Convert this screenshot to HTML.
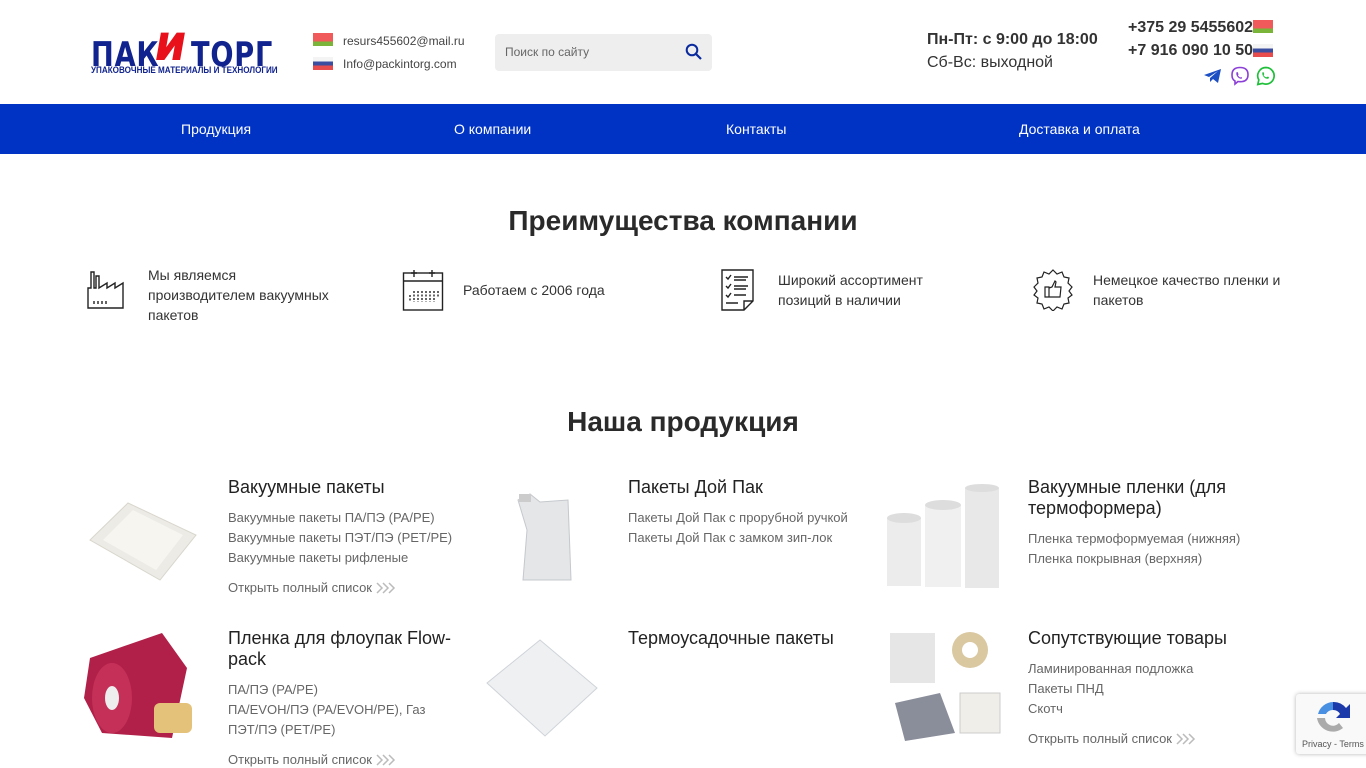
<!DOCTYPE html>
<html><head><meta charset="utf-8"><style>
*{margin:0;padding:0;box-sizing:border-box}
body{width:1366px;height:768px;overflow:hidden;background:#fff;font-family:"Liberation Sans",sans-serif;color:#333;position:relative}
.a{position:absolute}
.flag{position:absolute;width:20px;height:13px}
.by{background:linear-gradient(#f05a5a 0 66%,#7ab53a 66%)}
.ru{background:linear-gradient(#f4f4f4 0 33%,#3b4ea0 33% 66%,#e84c4c 66%)}
.nav{top:104px;left:0;width:1366px;height:50px;background:#0033c4}
.nav span{position:absolute;top:17px;color:#fff;font-size:14px}
h2{position:absolute;width:1366px;text-align:center;font-size:28px;font-weight:bold;color:#2a2a2a}
.adv{font-size:14px;line-height:20px;color:#333}
.pt{font-size:18px;color:#222;line-height:21px}
.pl{font-size:13px;color:#666;line-height:20px}
.more{font-size:13px;color:#666;white-space:nowrap}
.more svg{vertical-align:-2px;margin-left:4px}
</style></head><body>
<!-- logo -->
<div class="a" style="left:91px;top:22px;width:190px;height:55px">
 <div class="a" style="left:0;top:13px;font-size:34px;font-weight:900;color:#10238e;letter-spacing:1px;font-family:'DejaVu Sans',sans-serif;transform:scaleX(.8);transform-origin:left">ПАК</div>
 <div class="a" style="left:62px;top:-4px;font-size:50px;font-weight:900;font-style:italic;color:#e8101a;font-family:'DejaVu Sans',sans-serif;line-height:50px;transform:scaleX(.9)">и</div>
 <div class="a" style="left:100px;top:13px;font-size:34px;font-weight:900;color:#10238e;letter-spacing:1px;font-family:'DejaVu Sans',sans-serif;transform:scaleX(.8);transform-origin:left">ТОРГ</div>
 <div class="a" style="left:0;top:43px;font-size:9px;font-weight:bold;color:#10238e;white-space:nowrap;transform:scaleX(.9);transform-origin:left">УПАКОВОЧНЫЕ МАТЕРИАЛЫ И ТЕХНОЛОГИИ</div>
</div>
<div class="flag by" style="left:313px;top:33px"></div>
<div class="flag ru" style="left:313px;top:57px"></div>
<div class="a" style="left:343px;top:34px;font-size:12px;color:#444">resurs455602@mail.ru</div>
<div class="a" style="left:343px;top:57px;font-size:12px;color:#444">Info@packintorg.com</div>
<div class="a" style="left:495px;top:34px;width:217px;height:37px;background:#eee;border-radius:4px">
 <span class="a" style="left:10px;top:11px;font-size:12px;color:#666">Поиск по сайту</span>
 <svg class="a" style="left:190px;top:9px" width="17" height="17" viewBox="0 0 17 17"><circle cx="7" cy="7" r="5.3" fill="none" stroke="#0a2a9e" stroke-width="2"/><path d="M11 11l5 5" stroke="#0a2a9e" stroke-width="2.2"/></svg>
</div>
<div class="a" style="left:927px;top:31px;font-size:16px;font-weight:bold;color:#333">Пн-Пт: с 9:00 до 18:00</div>
<div class="a" style="left:927px;top:54px;font-size:16px;color:#333">Сб-Вс: выходной</div>
<div class="a" style="left:1128px;top:19px;font-size:16px;font-weight:bold;color:#333">+375 29 5455602</div>
<div class="a" style="left:1128px;top:42px;font-size:16px;font-weight:bold;color:#333">+7 916 090 10 50</div>
<div class="flag by" style="left:1253px;top:20px"></div>
<div class="flag ru" style="left:1253px;top:44px"></div>
<svg class="a" style="left:1204px;top:68px" width="18" height="16" viewBox="0 0 18 16"><path d="M0 7L17 1 14 15 9 11 6 14 6 10 14 3 5 9z" fill="#1d4fc4"/></svg>
<svg class="a" style="left:1230px;top:66px" width="20" height="20" viewBox="0 0 20 20"><path d="M10 1.5C5 1.5 2 3.5 2 9c0 3 1 5 3 6v3l3-2.5c1 .2 1.5.2 2 .2 5 0 8-2 8-7s-3-7.2-8-7.2z" fill="none" stroke="#8b3fd6" stroke-width="1.6"/><path d="M7 6c1 0 1 1 1.4 2s-1 1 0 2 1.4 1.6 2.6 1.2 1.2 1.3.5 1.5C9 13 6 10 6.3 7.2 6.4 6.5 6.5 6 7 6z" fill="#8b3fd6"/></svg>
<svg class="a" style="left:1256px;top:66px" width="20" height="20" viewBox="0 0 20 20"><path d="M10 1.5a8.3 8.3 0 0 0-7.2 12.4L1.8 18.5l4.7-1.1A8.3 8.3 0 1 0 10 1.5z" fill="none" stroke="#1fbf3a" stroke-width="1.7"/><path d="M7 6c.8 0 1 1.5 1.2 2s-1 .9-.3 1.7 1.7 1.7 2.6 1.5 1.2-1 2 -.3.5 1.7-.8 1.9C9 13 6.2 10 6.3 7.5 6.4 6.5 6.6 6 7 6z" fill="#1fbf3a"/></svg>
<div class="a nav"><span style="left:181px">Продукция</span><span style="left:454px">О компании</span><span style="left:726px">Контакты</span><span style="left:1019px">Доставка и оплата</span></div>

<h2 style="top:205px">Преимущества компании</h2>
<svg class="a" style="left:87px;top:270px" width="42" height="40" viewBox="0 0 42 40" fill="none" stroke="#222" stroke-width="1.4"><path d="M1 38V18h3V2h3v16h2V6h3v12l8-5v5l8-5v5l8-5v25z"/><path d="M7 31v3M11 31v3M15 31v3M19 31v3"/></svg>
<div class="a adv" style="left:148px;top:265px;width:185px">Мы являемся производителем вакуумных пакетов</div>
<svg class="a" style="left:402px;top:268px" width="42" height="43" viewBox="0 0 42 43" fill="none" stroke="#222" stroke-width="1.4"><rect x="1.5" y="5" width="39" height="37"/><path d="M1.5 13h39M12 2v7M30 2v7M9 5h6M27 5h6"/><path d="M8 27v7M12 23v11M16 23v11M20 23v11M24 23v11M28 23v11M32 23v11M36 23v6" stroke-dasharray="2 1.5"/></svg>
<div class="a adv" style="left:463px;top:280px">Работаем с 2006 года</div>
<svg class="a" style="left:721px;top:269px" width="34" height="42" viewBox="0 0 34 42" fill="none" stroke="#222" stroke-width="1.4"><path d="M1 1h31v31l-9 9H1z M23 41v-9h9"/><path d="M5 8l2 2 3-4M13 8h14M5 17l2 2 3-4M13 17h14M5 26l2 2 3-4M13 26h12M5 34h12M13 11h12M13 20h12"/></svg>
<div class="a adv" style="left:778px;top:270px">Широкий ассортимент<br>позиций в наличии</div>
<svg class="a" style="left:1032px;top:269px" width="42" height="42" viewBox="0 0 42 42" fill="none" stroke="#222" stroke-width="1.2"><path d="M21 1l4 4 5-2 2 5 5 1-1 5 4 4-3 4 3 4-4 3 1 5-5 1-2 5-5-2-4 4-4-4-5 2-2-5-5-1 1-5-4-3 3-4-3-4 4-4-1-5 5-1 2-5 5 2z"/><path d="M13 18h4v10h-4zM17 19l3-1 3-6 1 1-1 5h6l-1 10h-11"/></svg>
<div class="a adv" style="left:1093px;top:270px;width:200px">Немецкое качество пленки и пакетов</div>

<h2 style="top:406px">Наша продукция</h2>
<svg class="a" style="left:88px;top:495px" width="110" height="90" viewBox="0 0 110 90"><path d="M2 45L40 8 108 40 72 85z" fill="#ecebe6" stroke="#d8d6cc"/><path d="M15 45L45 15 95 40 68 75z" fill="#f6f5f0"/></svg>
<svg class="a" style="left:515px;top:490px" width="60" height="95" viewBox="0 0 60 95"><path d="M3 10l12-6 10 8 28-2 3 80H8L12 40z" fill="#e4e6e8" stroke="#c5c8cc"/><rect x="4" y="4" width="12" height="8" fill="#ccc"/></svg>
<svg class="a" style="left:883px;top:483px" width="120" height="115" viewBox="0 0 120 115"><rect x="4" y="35" width="34" height="68" fill="#ececec"/><rect x="42" y="22" width="36" height="82" fill="#f0f0f0"/><rect x="82" y="5" width="34" height="100" fill="#e8e8e8"/><ellipse cx="21" cy="35" rx="17" ry="5" fill="#ddd"/><ellipse cx="60" cy="22" rx="18" ry="5" fill="#ddd"/><ellipse cx="99" cy="5" rx="17" ry="4" fill="#ddd"/></svg>
<svg class="a" style="left:82px;top:628px" width="120" height="115" viewBox="0 0 120 115"><path d="M8 30L80 5l25 35-15 70-70-5L2 70z" fill="#b02048"/><ellipse cx="30" cy="70" rx="20" ry="35" fill="#c43058"/><ellipse cx="30" cy="70" rx="7" ry="12" fill="#eee"/><rect x="72" y="75" width="38" height="30" rx="6" fill="#e4c27a"/></svg>
<svg class="a" style="left:485px;top:638px" width="115" height="100" viewBox="0 0 115 100"><path d="M2 45L55 2 112 50 60 98z" fill="#eef0f2" stroke="#cfd3d8"/></svg>
<svg class="a" style="left:885px;top:628px" width="120" height="115" viewBox="0 0 120 115"><rect x="5" y="5" width="45" height="50" fill="#e6e6e6"/><circle cx="85" cy="22" r="18" fill="#d9c8a0"/><circle cx="85" cy="22" r="8" fill="#fff"/><path d="M10 75l45-10 15 40-50 8z" fill="#8a8d9a"/><rect x="75" y="65" width="40" height="40" fill="#f0eee8" stroke="#ccc"/></svg>
<div class="a pt" style="left:228px;top:477px">Вакуумные пакеты</div>
<div class="a pl" style="left:228px;top:508px">Вакуумные пакеты ПА/ПЭ (PA/PE)<br>Вакуумные пакеты ПЭТ/ПЭ (PET/PE)<br>Вакуумные пакеты рифленые</div>
<div class="a more" style="left:228px;top:580px">Открыть полный список<svg width="20" height="12" viewBox="0 0 20 12" fill="none" stroke="#bbb" stroke-width="1.5"><path d="M1 1l5 5-5 5M7 1l5 5-5 5M13 1l5 5-5 5"/></svg></div>
<div class="a pt" style="left:628px;top:477px">Пакеты Дой Пак</div>
<div class="a pl" style="left:628px;top:508px">Пакеты Дой Пак с прорубной ручкой<br>Пакеты Дой Пак с замком зип-лок</div>
<div class="a pt" style="left:1028px;top:477px;width:240px">Вакуумные пленки (для термоформера)</div>
<div class="a pl" style="left:1028px;top:529px">Пленка термоформуемая (нижняя)<br>Пленка покрывная (верхняя)</div>
<div class="a pt" style="left:228px;top:628px;width:240px">Пленка для флоупак Flow-pack</div>
<div class="a pl" style="left:228px;top:680px;width:230px">ПА/ПЭ (PA/PE)<br>ПА/EVOH/ПЭ (PA/EVOH/PE), Газ ПЭТ/ПЭ (PET/PE)</div>
<div class="a more" style="left:228px;top:752px">Открыть полный список<svg width="20" height="12" viewBox="0 0 20 12" fill="none" stroke="#bbb" stroke-width="1.5"><path d="M1 1l5 5-5 5M7 1l5 5-5 5M13 1l5 5-5 5"/></svg></div>
<div class="a pt" style="left:628px;top:628px">Термоусадочные пакеты</div>
<div class="a pt" style="left:1028px;top:628px">Сопутствующие товары</div>
<div class="a pl" style="left:1028px;top:659px">Ламинированная подложка<br>Пакеты ПНД<br>Скотч</div>
<div class="a more" style="left:1028px;top:731px">Открыть полный список<svg width="20" height="12" viewBox="0 0 20 12" fill="none" stroke="#bbb" stroke-width="1.5"><path d="M1 1l5 5-5 5M7 1l5 5-5 5M13 1l5 5-5 5"/></svg></div>
<div class="a" style="left:1296px;top:694px;width:76px;height:60px;background:#f9f9f9;box-shadow:0 0 4px rgba(0,0,0,.3);border-radius:3px">
 <svg class="a" style="left:18px;top:6px" width="38" height="36" viewBox="0 0 38 36"><path d="M19 2A16 16 0 0 0 4 14h8a8 8 0 0 1 7-4z" fill="#4a90e2"/><path d="M19 2v8a8 8 0 0 1 7 4l-4 4h14V4l-4 4A16 16 0 0 0 19 2z" fill="#1c3aa9"/><path d="M3 18h8a8 8 0 0 0 14 5l4 5a16 16 0 0 1-26-10z" fill="#ababab"/></svg>
 <div class="a" style="left:6px;top:45px;font-size:9px;color:#555">Privacy - Terms</div>
</div>
</body></html>
